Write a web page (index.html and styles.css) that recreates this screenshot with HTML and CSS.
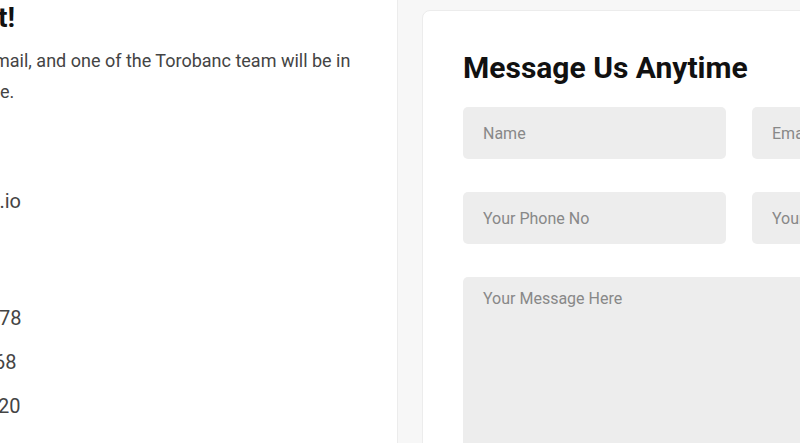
FILE: index.html
```html
<!DOCTYPE html>
<html lang="en">
<head>
<meta charset="utf-8">
<title>Contact</title>
<link rel="stylesheet" href="styles.css">
</head>
<body>
<div class="page">
  <section class="info">
    <h2 class="info-title"><span class="cut-title">t!</span></h2>
    <p class="info-text">
      <span class="line l1">mail, and one of the Torobanc team will be in</span>
      <span class="line l2">e.</span>
    </p>
    <div class="contact email"><span class="cut-email">c.io</span></div>
    <ul class="phones">
      <li><span class="cut-p1">78</span></li>
      <li><span class="cut-p2">68</span></li>
      <li><span class="cut-p3">20</span></li>
    </ul>
  </section>
  <section class="panel">
    <form class="card">
      <h2 class="card-title">Message Us Anytime</h2>
      <div class="grid">
        <input class="field" type="text" placeholder="Name">
        <input class="field" type="email" placeholder="Email Address">
        <input class="field" type="text" placeholder="Your Phone No">
        <input class="field" type="text" placeholder="Your Subject">
        <textarea class="field area" placeholder="Your Message Here"></textarea>
      </div>
    </form>
  </section>
</div>
</body>
</html>
```

FILE: styles.css
```css
* { box-sizing: border-box; }
html, body { margin: 0; padding: 0; }
body {
  width: 800px;
  height: 443px;
  overflow: hidden;
  background: #ffffff;
  font-family: Roboto, "Liberation Sans", sans-serif;
}
.page {
  display: flex;
  height: 443px;
}
.info {
  width: 397px;
  flex: none;
  overflow: hidden;
  color: #444;
}
.info span { display: block; white-space: nowrap; }
.info-title {
  margin: 0;
  font-size: 28px;
  font-weight: 700;
  line-height: 34px;
  color: #111;
  padding-top: 1px;
}
.cut-title { margin-left: -2px; }
.info-text {
  margin: 10px 0 0;
  font-size: 18px;
  line-height: 31px;
}
.l1 { margin-left: -6px; }
.l2 { margin-left: 0; }
.contact.email {
  margin-top: 79px;
  font-size: 20px;
  line-height: 30px;
}
.cut-email { margin-left: -11px; }
.phones {
  list-style: none;
  margin: 80px 0 0;
  padding: 0;
  font-size: 20px;
  line-height: 44px;
}
.cut-p1 { margin-left: -1px; }
.cut-p2 { margin-left: -6px; }
.cut-p3 { margin-left: -2px; }

.panel {
  flex: 1;
  min-width: 0;
  background: #f7f7f7;
  border-left: 1px solid #ececec;
  padding: 10px 0 0 24px;
  overflow: hidden;
}
.card {
  width: 640px;
  background: #ffffff;
  border: 1px solid #ececec;
  border-radius: 8px;
  padding: 39px 40px 40px 40px;
  min-height: 600px;
}
.card-title {
  margin: 0 0 21px;
  font-size: 30px;
  line-height: 36px;
  font-weight: 700;
  color: #111;
}
.grid {
  display: grid;
  grid-template-columns: 263px 263px;
  column-gap: 26px;
  row-gap: 33px;
}
.field {
  height: 52px;
  border: none;
  border-radius: 5px;
  background: #ededed;
  padding: 0 20px;
  font-family: Roboto, "Liberation Sans", sans-serif;
  font-size: 16px;
  color: #333;
  outline: none;
}
.field::placeholder { color: #888; }
.area {
  grid-column: 1 / -1;
  height: 200px;
  padding-top: 12px;
  resize: none;
}
```
